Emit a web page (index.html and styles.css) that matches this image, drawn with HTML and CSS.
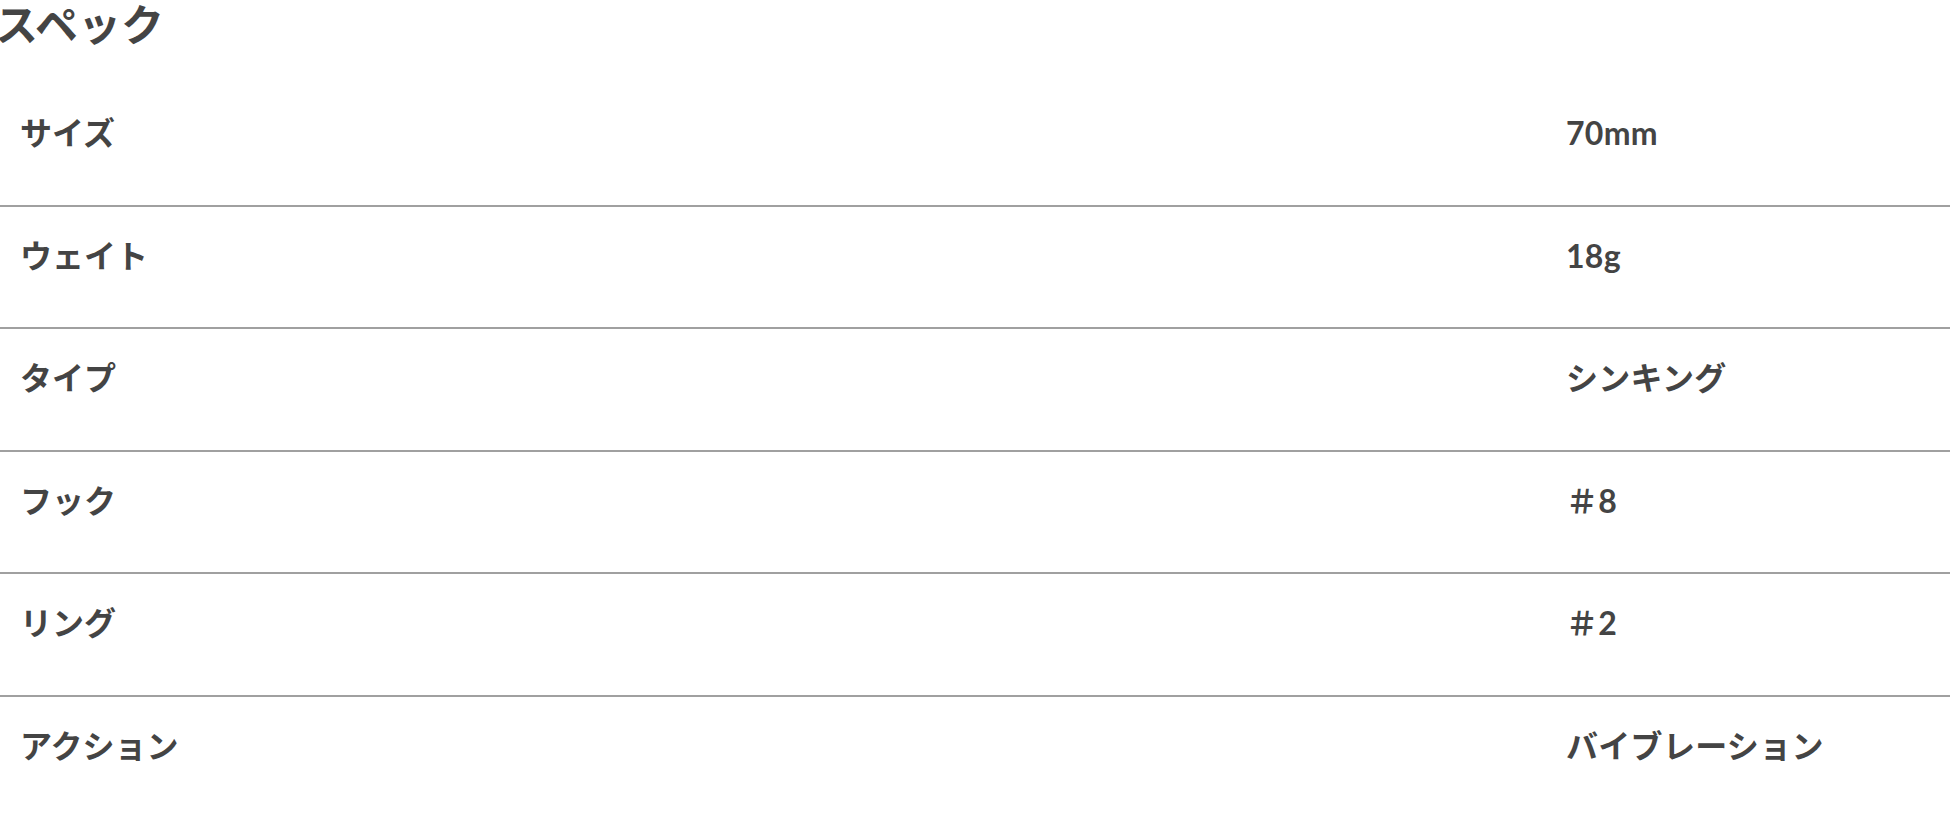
FILE: index.html
```html
<!DOCTYPE html>
<html lang="ja">
<head>
<meta charset="utf-8">
<title>スペック</title>
<link rel="stylesheet" href="styles.css">
</head>
<body>
<section class="spec">
  <h2 class="spec-title">スペック</h2>
  <dl class="spec-list">
    <div class="spec-row"><dt class="spec-label">サイズ</dt><dd class="spec-value">70mm</dd></div>
    <div class="spec-row"><dt class="spec-label">ウェイト</dt><dd class="spec-value">18g</dd></div>
    <div class="spec-row"><dt class="spec-label">タイプ</dt><dd class="spec-value">シンキング</dd></div>
    <div class="spec-row"><dt class="spec-label">フック</dt><dd class="spec-value">＃8</dd></div>
    <div class="spec-row"><dt class="spec-label">リング</dt><dd class="spec-value">＃2</dd></div>
    <div class="spec-row"><dt class="spec-label">アクション</dt><dd class="spec-value">バイブレーション</dd></div>
  </dl>
</section>
</body>
</html>
```

FILE: styles.css
```css
html, body {
  margin: 0;
  padding: 0;
  background: #ffffff;
}

body {
  font-family: "Lato", "Noto Sans CJK JP", sans-serif;
  color: #444444;
  overflow: hidden;
}

.spec-title {
  box-sizing: border-box;
  margin: 0 0 0 -5px;
  padding-top: 1px;
  font-size: 43px;
  line-height: 48px;
  font-weight: 700;
  height: 84px;
}

.spec-list {
  margin: 0;
  padding: 0;
}

.spec-row {
  box-sizing: border-box;
  display: grid;
  grid-template-columns: 1546px 1fr;
  height: 122.5px;
  border-bottom: 2px solid #a0a0a0;
}

.spec-label,
.spec-value {
  margin: 0;
  padding: 25px 20px 0;
  font-size: 32px;
  line-height: 48px;
  font-weight: 700;
}

.spec-value {
  letter-spacing: 0.3px;
}
```
